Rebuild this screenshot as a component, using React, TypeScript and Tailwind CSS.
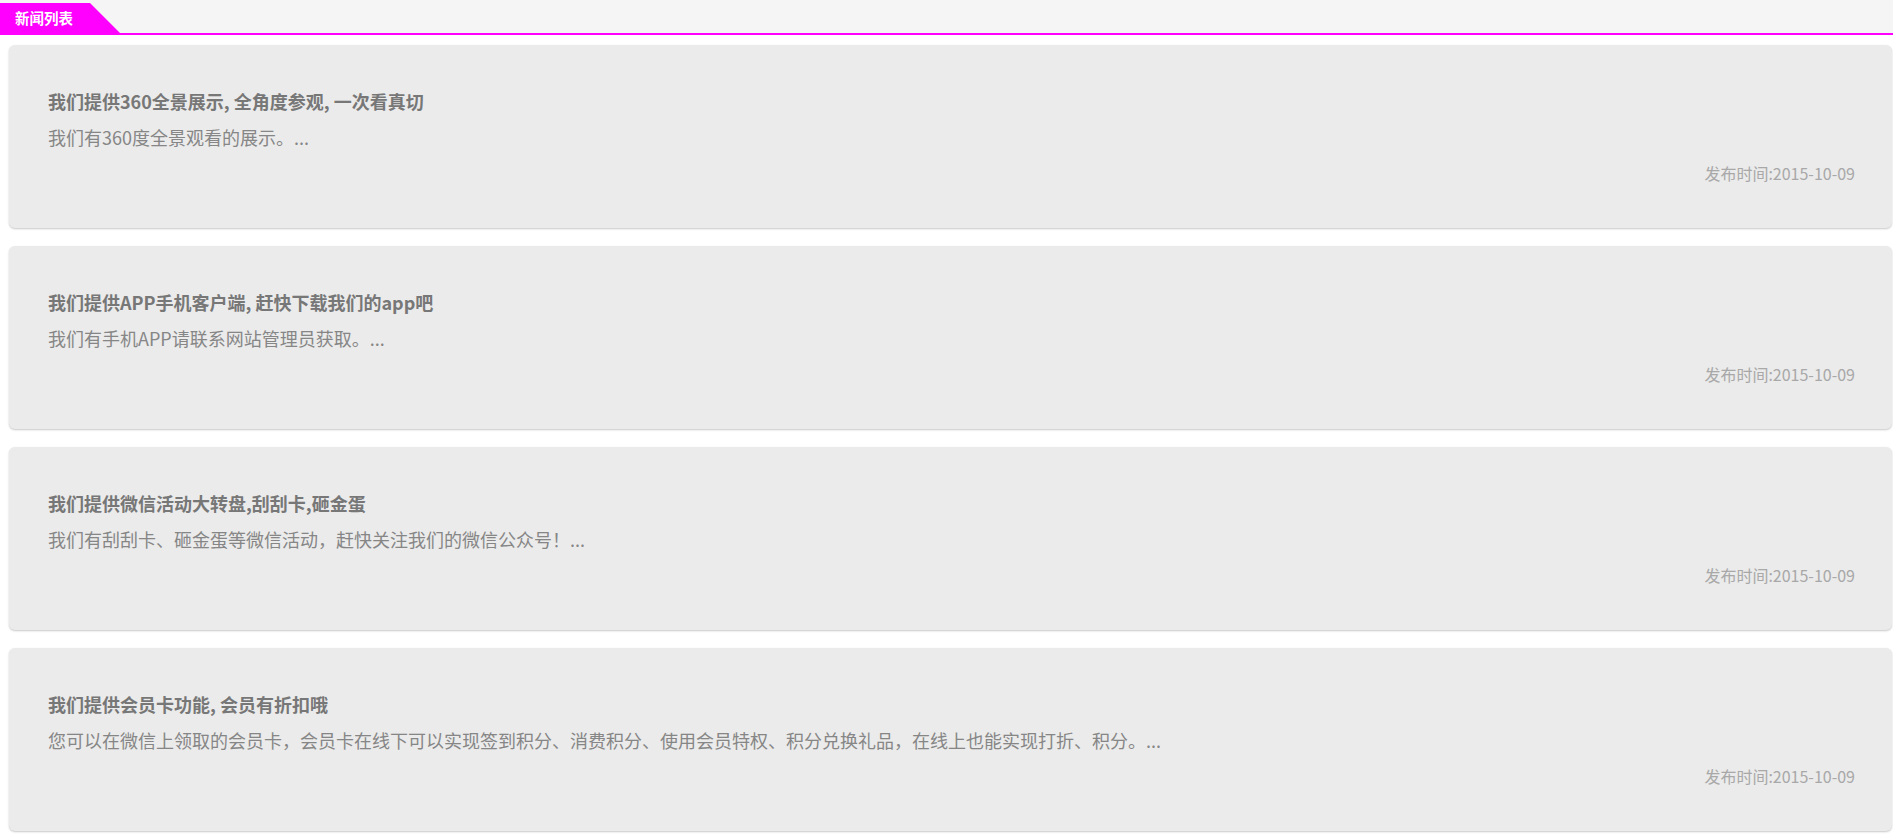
import React from 'react';

const NEWS = [
  {
    title: '我们提供360全景展示, 全角度参观, 一次看真切',
    summary: '我们有360度全景观看的展示。...',
    date: '2015-10-09',
  },
  {
    title: '我们提供APP手机客户端, 赶快下载我们的app吧',
    summary: '我们有手机APP请联系网站管理员获取。...',
    date: '2015-10-09',
  },
  {
    title: '我们提供微信活动大转盘,刮刮卡,砸金蛋',
    summary: '我们有刮刮卡、砸金蛋等微信活动，赶快关注我们的微信公众号！...',
    date: '2015-10-09',
  },
  {
    title: '我们提供会员卡功能, 会员有折扣哦',
    summary:
      '您可以在微信上领取的会员卡，会员卡在线下可以实现签到积分、消费积分、使用会员特权、积分兑换礼品，在线上也能实现打折、积分。...',
    date: '2015-10-09',
  },
];

const App: React.FC = () => {
  return (
    <div className="min-h-screen bg-white font-['Noto_Sans_CJK_SC',sans-serif]">
      {/* header strip with the slanted tab */}
      <div className="bg-[#f5f5f5] pt-[3px] border-b-2 border-[#f0f]">
        <div
          className="w-[120px] h-[30px] bg-[#f0f] flex items-center pl-[15px] text-white text-[14.5px] font-bold leading-none"
          style={{ clipPath: 'polygon(0 0, 90px 0, 120px 30px, 0 30px)' }}
        >
          新闻列表
        </div>
      </div>

      {/* news cards */}
      <div className="flex flex-col gap-[18px] pt-[10px] pl-[9px] pr-px">
        {NEWS.map((item, i) => (
          <div
            key={i}
            className="h-[183px] bg-[#ebebeb] rounded-[6px] shadow-[0_1px_2px_rgba(0,0,0,0.22)] pl-[39px] pr-[37px] pt-[44px] flex flex-col"
          >
            <h3 className="text-[18px] leading-[24px] font-bold text-[#777777]">{item.title}</h3>
            <p className="mt-[12px] text-[18px] leading-[24px] text-[#868686]">{item.summary}</p>
            <div className="mt-[14px] text-right text-[16px] leading-[20px] text-[#a8a8a8]">
              发布时间:{item.date}
            </div>
          </div>
        ))}
      </div>
    </div>
  );
};

export default App;
